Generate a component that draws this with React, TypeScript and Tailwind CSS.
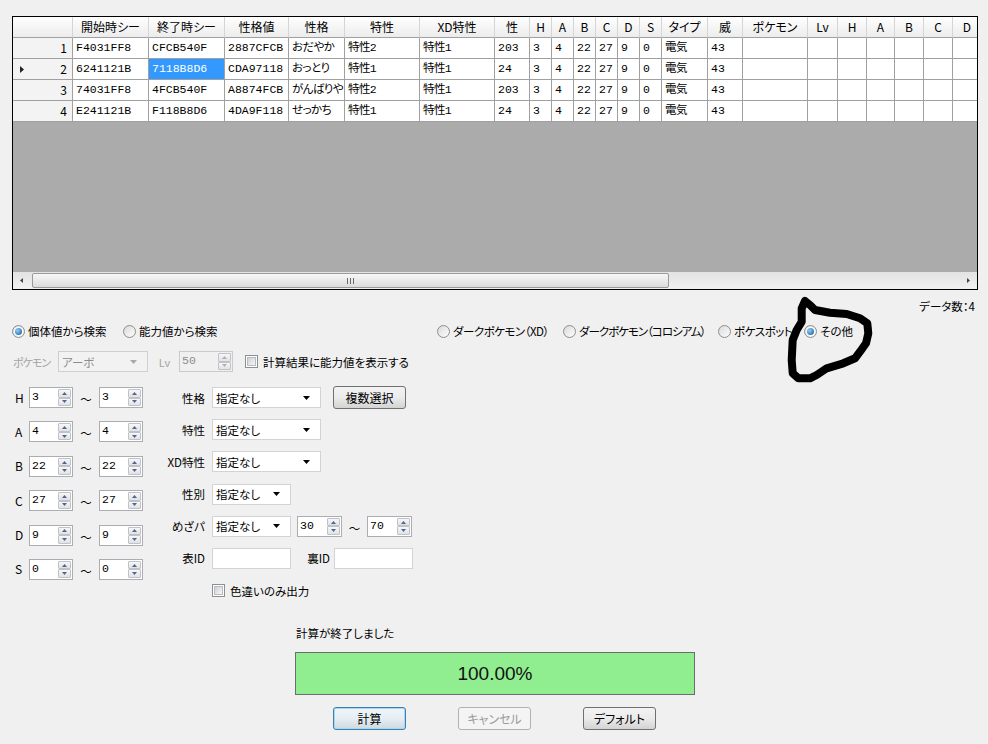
import React from "react";

const UI = "font-['Noto_Sans_CJK_JP','Noto_Sans',sans-serif]";
const MONO = "font-['Liberation_Mono','Noto_Sans_CJK_JP',monospace]";

type Col = { h: string; w: string };
const cols: Col[] = [
  { h: "開始時シー", w: "w-[76px]" },
  { h: "終了時シー", w: "w-[76px]" },
  { h: "性格値", w: "w-[64px]" },
  { h: "性格", w: "w-[56px]" },
  { h: "特性", w: "w-[75px]" },
  { h: "XD特性", w: "w-[75px]" },
  { h: "性", w: "w-[35px]" },
  { h: "H", w: "w-[22px]" },
  { h: "A", w: "w-[22px]" },
  { h: "B", w: "w-[22px]" },
  { h: "C", w: "w-[22px]" },
  { h: "D", w: "w-[22px]" },
  { h: "S", w: "w-[22px]" },
  { h: "タイプ", w: "w-[46px]" },
  { h: "威", w: "w-[35px]" },
  { h: "ポケモン", w: "w-[65px]" },
  { h: "Lv", w: "w-[30px]" },
  { h: "H", w: "w-[29px]" },
  { h: "A", w: "w-[28px]" },
  { h: "B", w: "w-[29px]" },
  { h: "C", w: "w-[29px]" },
  { h: "D", w: "w-[29px]" },
];

const tail = ["3", "4", "22", "27", "9", "0", "電気", "43", "", "", "", "", "", "", ""];
const rows: string[][] = [
  ["F4031FF8", "CFCB540F", "2887CFCB", "おだやか", "特性2", "特性1", "203", ...tail],
  ["6241121B", "7118B8D6", "CDA97118", "おっとり", "特性1", "特性1", "24", ...tail],
  ["74031FF8", "4FCB540F", "A8874FCB", "がんばりや", "特性2", "特性1", "203", ...tail],
  ["E241121B", "F118B8D6", "4DA9F118", "せっかち", "特性1", "特性1", "24", ...tail],
];

function UpTri({ color = "#4f6598" }: { color?: string }) {
  return (
    <svg width="5" height="3" viewBox="0 0 5 3">
      <polygon points="0,3 2.5,0 5,3" fill={color} />
    </svg>
  );
}
function DownTri({ color = "#4f6598" }: { color?: string }) {
  return (
    <svg width="5" height="3" viewBox="0 0 5 3">
      <polygon points="0,0 5,0 2.5,3" fill={color} />
    </svg>
  );
}

function Spin({ v, w, disabled }: { v: string; w: string; disabled?: boolean }) {
  const tri = disabled ? "#b0b0b0" : "#4f6598";
  return (
    <div
      className={`${w} h-[21px] shrink-0 border flex ${
        disabled ? "border-[#cacaca] bg-[#f0f0f0] text-[#8d8d8d]" : "border-[#abadb3] bg-white text-black"
      }`}
    >
      <div className={`flex-1 pl-[2px] pt-[2px] text-[11.5px] leading-[14px] ${MONO}`}>{v}</div>
      <div className="w-[15px] flex flex-col p-[1px]">
        <div className="flex-1 border border-[#bfc2c8] rounded-[1px] bg-linear-to-b from-[#f7f7f7] to-[#e2e2e2] flex items-center justify-center">
          <UpTri color={tri} />
        </div>
        <div className="flex-1 border border-[#bfc2c8] rounded-[1px] bg-linear-to-b from-[#f7f7f7] to-[#e2e2e2] flex items-center justify-center">
          <DownTri color={tri} />
        </div>
      </div>
    </div>
  );
}

function Combo({ v, w, disabled }: { v: string; w: string; disabled?: boolean }) {
  return (
    <div
      className={`${w} h-[21px] shrink-0 border flex items-center pl-[3px] pr-[10px] ${
        disabled ? "border-[#cfcfcf] bg-[#f2f2f2] text-[#8d8d8d]" : "border-[#d3d3d3] bg-white text-black"
      }`}
    >
      <span className="flex-1 leading-[14px]">{v}</span>
      <svg width="7" height="4" viewBox="0 0 7 4">
        <polygon points="0,0 7,0 3.5,4" fill={disabled ? "#a8a8a8" : "#000"} />
      </svg>
    </div>
  );
}

function TextBox({ w }: { w: string }) {
  return <div className={`${w} h-[21px] shrink-0 border border-[#d3d3d3] bg-white`} />;
}

function Check() {
  return (
    <div className="w-[13px] h-[13px] shrink-0 border border-[#8e8f8f] bg-white p-[1px]">
      <div className="w-full h-full border border-[#b8bcc2] bg-linear-to-br from-[#cdd0d4] to-[#f7f7f7]" />
    </div>
  );
}

function Radio({ label, checked, w, t = "" }: { label: string; checked?: boolean; w: string; t?: string }) {
  return (
    <div className={`${w} shrink-0 flex items-center gap-[3px]`}>
      <div className="w-[13px] h-[13px] shrink-0 rounded-full border border-[#8e8f8f] bg-linear-to-br from-[#d8d8d8] to-[#fbfbfb] flex items-center justify-center">
        {checked ? (
          <div className="w-[9px] h-[9px] rounded-full bg-white flex items-center justify-center">
            <div className="w-[7px] h-[7px] rounded-full bg-radial-[at_35%_35%] from-[#8fd0fa] to-[#0b55a0]" />
          </div>
        ) : (
          <div className="w-[9px] h-[9px] rounded-full bg-linear-to-br from-[#dedede] to-[#fafafa]" />
        )}
      </div>
      <span className={`leading-[14px] whitespace-nowrap ${t}`}>{label}</span>
    </div>
  );
}

function Btn({ label, focused, disabled }: { label: string; focused?: boolean; disabled?: boolean }) {
  let cls = "border-[#707070] bg-linear-to-b from-[#f3f3f3] via-[#ebebeb] to-[#d3d3d3] text-black";
  if (focused) cls = "border-[#3c7fb1] bg-linear-to-b from-[#eef6fb] via-[#e6eef4] to-[#cfd9e0] text-black shadow-[inset_0_0_0_1px_#a8d8f0]";
  if (disabled) cls = "border-[#adb2b5] bg-[#f4f4f4] text-[#9a9a9a]";
  return (
    <div className={`w-[73px] h-[23px] shrink-0 rounded-[3px] border flex items-center justify-center text-[12px] ${cls}`}>
      {label}
    </div>
  );
}

const isAscii = (s: string) => /^[\x00-\x7f]*$/.test(s);

export default function App() {
  return (
    <div
      className={`relative flex flex-col w-[988px] h-[744px] overflow-hidden bg-[#f0f0f0] text-black ${UI} text-[11.5px] leading-[14px] [font-feature-settings:'palt']`}
    >
      {/* Data grid */}
      <div className="ml-[12px] mt-[16px] w-[966px] h-[274px] shrink-0 border border-black flex flex-col overflow-hidden bg-[#ababab]">
        <div className="flex h-[21px] shrink-0">
          <div className="w-[60px] shrink-0 border-r border-b border-r-[#d5d5d5] border-b-[#a0a0a0] bg-linear-to-b from-white to-[#ececec]" />
          {cols.map((c, i) => (
            <div
              key={i}
              className={`${c.w} shrink-0 border-r border-b border-r-[#d5d5d5] border-b-[#a0a0a0] bg-linear-to-b from-white to-[#ececec] flex items-center justify-center text-[12px] whitespace-nowrap overflow-hidden`}
            >
              {c.h}
            </div>
          ))}
        </div>
        {rows.map((r, ri) => (
          <div key={ri} className="flex h-[21px] shrink-0">
            <div className="w-[60px] shrink-0 border-r border-b border-[#a0a0a0] bg-[#f3f3f3] flex items-center pl-[7px] pr-[5px] text-[12px]">
              {ri === 1 ? (
                <svg width="4" height="7" viewBox="0 0 4 7">
                  <polygon points="0,0 4,3.5 0,7" fill="#222" />
                </svg>
              ) : null}
              <span className="ml-auto">{ri + 1}</span>
            </div>
            {r.map((v, ci) => {
              const sel = ri === 1 && ci === 1;
              return (
                <div
                  key={ci}
                  className={`${cols[ci].w} shrink-0 border-r border-b border-[#a0a0a0] flex items-center pl-[3px] text-[11.5px] whitespace-nowrap overflow-hidden ${MONO} ${
                    isAscii(v) ? "" : "tracking-[-0.6px] pl-[2px]"
                  } ${sel ? "bg-[#3399ff] text-white" : "bg-white text-black"}`}
                >
                  {v}
                </div>
              );
            })}
          </div>
        ))}
        <div className="flex-1" />
        <div className="h-[17px] shrink-0 flex bg-linear-to-b from-[#e3e3e3] to-[#f1f1f1]">
          <div className="w-[17px] shrink-0 flex items-center justify-center">
            <svg width="3" height="5" viewBox="0 0 3 5">
              <polygon points="3,0 0,2.5 3,5" fill="#444" />
            </svg>
          </div>
          <div className="ml-[2px] my-[1px] w-[637px] shrink-0 rounded-[2px] border border-[#9a9a9a] bg-linear-to-b from-[#f7f7f7] to-[#dcdcdc] flex items-center justify-center gap-[2px]">
            <div className="w-[1px] h-[6px] bg-[#6a6a6a]" />
            <div className="w-[1px] h-[6px] bg-[#6a6a6a]" />
            <div className="w-[1px] h-[6px] bg-[#6a6a6a]" />
          </div>
          <div className="flex-1" />
          <div className="w-[17px] shrink-0 flex items-center justify-center">
            <svg width="3" height="5" viewBox="0 0 3 5">
              <polygon points="0,0 3,2.5 0,5" fill="#444" />
            </svg>
          </div>
        </div>
      </div>

      {/* Data count */}
      <div className="mt-[9px] h-[14px] shrink-0 pr-[13px] flex justify-end">データ数：4</div>

      {/* Radio row */}
      <div className="mt-[10px] h-[16px] shrink-0 pl-[12px] flex items-center">
        <Radio w="w-[111px]" label="個体値から検索" checked />
        <Radio w="w-[314px]" label="能力値から検索" />
        <Radio w="w-[126px]" label="ダークポケモン（XD）" t="tracking-[-0.5px]" />
        <Radio w="w-[155px]" label="ダークポケモン（コロシアム）" t="tracking-[-1px]" />
        <Radio w="w-[86px]" label="ポケスポット" t="tracking-[-0.5px]" />
        <Radio w="w-[80px]" label="その他" checked />
      </div>

      {/* Pokemon row */}
      <div className="mt-[12px] h-[21px] shrink-0 pl-[13px] flex items-center">
        <div className="w-[45px] shrink-0 text-[#a3a3a3] text-[11px] tracking-[-1px]">ポケモン</div>
        <Combo w="w-[90px]" v="アーボ" disabled />
        <div className="w-[31px] shrink-0 text-center text-[#a3a3a3] text-[11px] pl-[2px]">Lv</div>
        <Spin w="w-[54px]" v="50" disabled />
        <div className="ml-[12px] flex items-center gap-[5px]">
          <Check />
          <span>計算結果に能力値を表示する</span>
        </div>
      </div>

      {/* Form */}
      <div className="mt-[15px] h-[214px] shrink-0 flex items-start">
        <div className="w-[143px] shrink-0 pl-[13px] flex flex-col gap-[13.4px]">
          {[
            ["H", "3"],
            ["A", "4"],
            ["B", "22"],
            ["C", "27"],
            ["D", "9"],
            ["S", "0"],
          ].map(([k, v]) => (
            <div key={k} className="h-[21px] flex items-center">
              <div className="w-[16px] shrink-0 pl-[2px] text-[12px]">{k}</div>
              <Spin w="w-[44px]" v={v} />
              <div className="w-[26px] shrink-0 text-center pt-[3px]">～</div>
              <Spin w="w-[44px]" v={v} />
            </div>
          ))}
        </div>
        <div className="flex flex-col gap-[11.2px]">
          <div className="h-[21px] flex items-center">
            <div className="w-[63px] shrink-0 text-right pr-[1px]">性格</div>
            <div className="ml-[6px]">
              <Combo w="w-[109px]" v="指定なし" />
            </div>
            <div className="ml-[12px]">
              <Btn label="複数選択" />
            </div>
          </div>
          <div className="h-[21px] flex items-center">
            <div className="w-[63px] shrink-0 text-right pr-[1px]">特性</div>
            <div className="ml-[6px]">
              <Combo w="w-[109px]" v="指定なし" />
            </div>
          </div>
          <div className="h-[21px] flex items-center">
            <div className="w-[63px] shrink-0 text-right pr-[1px]">XD特性</div>
            <div className="ml-[6px]">
              <Combo w="w-[109px]" v="指定なし" />
            </div>
          </div>
          <div className="h-[21px] flex items-center">
            <div className="w-[63px] shrink-0 text-right pr-[1px]">性別</div>
            <div className="ml-[6px]">
              <Combo w="w-[79px]" v="指定なし" />
            </div>
          </div>
          <div className="h-[21px] flex items-center">
            <div className="w-[63px] shrink-0 text-right pr-[1px]">めざパ</div>
            <div className="ml-[6px] flex items-center">
              <Combo w="w-[79px]" v="指定なし" />
              <div className="ml-[6px]">
                <Spin w="w-[45px]" v="30" />
              </div>
              <div className="w-[25px] shrink-0 text-center pt-[3px]">～</div>
              <Spin w="w-[45px]" v="70" />
            </div>
          </div>
          <div className="h-[21px] flex items-center">
            <div className="w-[63px] shrink-0 text-right pr-[1px]">表ID</div>
            <div className="ml-[6px] flex items-center">
              <TextBox w="w-[79px]" />
              <div className="w-[39px] shrink-0 text-right">裏ID</div>
              <div className="ml-[4px]">
                <TextBox w="w-[79px]" />
              </div>
            </div>
          </div>
          <div className="h-[21px] flex items-center">
            <div className="w-[63px] shrink-0" />
            <div className="ml-[6px] flex items-center gap-[5px]">
              <Check />
              <span>色違いのみ出力</span>
            </div>
          </div>
        </div>
      </div>

      {/* Status / progress / buttons */}
      <div className="mt-[25px] ml-[295px] w-[400px] flex flex-col">
        <div className="h-[14px] pl-[1px]">計算が終了しました</div>
        <div className="mt-[12px] h-[43px] border border-[#6d6d6d] bg-[#90ee90] flex items-center justify-center font-['Liberation_Sans',sans-serif] text-[19px] text-[#111]">
          100.00%
        </div>
        <div className="mt-[12px] h-[23px] pl-[38px] flex gap-[52px]">
          <Btn label="計算" focused />
          <Btn label="キャンセル" disabled />
          <Btn label="デフォルト" />
        </div>
      </div>

      {/* Hand-drawn scribble overlay */}
      <svg className="absolute left-0 top-0 pointer-events-none" width="988" height="744" viewBox="0 0 988 744">
        <path
          d="M805 301 L810 305 L815 310 L830 312.7 L846.7 314 L860 318.3 L867.3 323.3 L868.3 333.3 L866 343.3 L860 351.7 L855 358.3 L843.3 363.3 L826.7 368.3 L816.7 375 L810 378.3 L798.3 378.3 L792.7 373.3 L791.7 360 L792.7 340 L796.7 330 L801.7 321.7 L801.7 308.3 Z"
          fill="none"
          stroke="#000"
          strokeWidth="8"
          strokeLinejoin="round"
          strokeLinecap="round"
        />
      </svg>
    </div>
  );
}
